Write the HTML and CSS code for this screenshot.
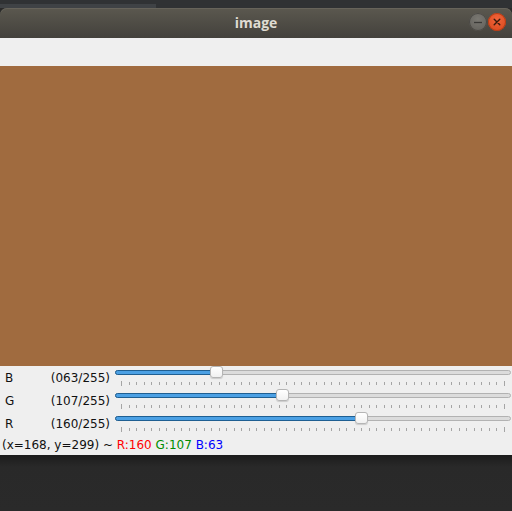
FILE: index.html
```html
<!DOCTYPE html>
<html>
<head>
<meta charset="utf-8">
<link rel="stylesheet" href="styles.css">
</head>
<body>
<div class="desktop-top"><div class="panel-seg"></div></div>
<div class="window">
  <div class="titlebar">
    <div class="title">image</div>
    <div class="buttons">
      <div class="btn btn-min"><svg width="18" height="18" viewBox="0 0 18 18"><line x1="5" y1="9.5" x2="13" y2="9.5" stroke="#3a3936" stroke-width="1.3"/></svg></div>
      <div class="btn btn-close"><svg width="18" height="18" viewBox="0 0 18 18"><path d="M6.2 6.2 L11.8 11.8 M11.8 6.2 L6.2 11.8" stroke="#3a1a0c" stroke-width="1.4" stroke-linecap="round"/></svg></div>
    </div>
  </div>
  <div class="toolbar"></div>
  <div class="canvas"></div>
  <div class="controls">
    <div class="row">
      <div class="name">B</div>
      <div class="val">(063/255)</div>
      <div class="slider">
        <div class="track"><div class="fill" style="width:101px"></div></div>
        <div class="thumb" style="left:94.5px"></div>
        <div class="ticks" id="t1"></div>
      </div>
    </div>
    <div class="row">
      <div class="name">G</div>
      <div class="val">(107/255)</div>
      <div class="slider">
        <div class="track"><div class="fill" style="width:167px"></div></div>
        <div class="thumb" style="left:160.5px"></div>
        <div class="ticks"></div>
      </div>
    </div>
    <div class="row">
      <div class="name">R</div>
      <div class="val">(160/255)</div>
      <div class="slider">
        <div class="track"><div class="fill" style="width:246px"></div></div>
        <div class="thumb" style="left:239.5px"></div>
        <div class="ticks"></div>
      </div>
    </div>
    <div class="status">(x=168, y=299) ~ <span class="r">R:160</span> <span class="g">G:107</span> <span class="b">B:63</span></div>
  </div>
</div>
<div class="desk-bottom"></div>
<script src="ticks.js"></script>
</body>
</html>
```
FILE: ticks.js
```js
document.querySelectorAll('.ticks').forEach(function (t) {
  for (var i = 0; i <= 51; i++) {
    var s = document.createElement('span');
    s.className = (i === 0 || i === 51) ? 'tick long' : 'tick';
    t.appendChild(s);
  }
});
```
FILE: styles.css
```css
html, body {
  margin: 0;
  padding: 0;
  background: #2a2a2a;
  width: 512px;
  height: 511px;
  overflow: hidden;
  font-family: "DejaVu Sans", sans-serif;
}
.desktop-top {
  height: 8px;
  background: #303234;
  padding-top: 4px;
  box-sizing: border-box;
}
.panel-seg {
  width: 156px;
  height: 4px;
  background: #3f4245;
}
.window {
  display: flex;
  flex-direction: column;
  width: 512px;
}
.titlebar {
  height: 30px;
  border-radius: 7px 7px 0 0;
  background: linear-gradient(#5b584f, #43413c);
  box-shadow: inset 0 1px 0 #67645b;
  display: flex;
  align-items: center;
  justify-content: center;
  position: relative;
}
.title {
  font-family: "Open Sans", sans-serif;
  font-weight: 700;
  font-size: 14px;
  color: #dfdbd2;
  margin-top: -1px;
}
.buttons {
  position: absolute;
  right: 6px;
  top: 5px;
  display: flex;
  gap: 1px;
}
.btn {
  width: 18px;
  height: 18px;
  border-radius: 50%;
}
.btn svg { display: block; }
.btn-min {
  background: radial-gradient(circle at 50% 35%, #7a7872, #5f5d58);
  box-shadow: inset 0 0 0 1px #4a4844;
}
.btn-close {
  background: radial-gradient(circle at 50% 35%, #f0643a, #d8461a);
  box-shadow: inset 0 0 0 1px #b43c16;
}
.toolbar {
  height: 28px;
  background: #efefef;
}
.canvas {
  height: 300px;
  background: #a06b3f;
}
.controls {
  background: #efefef;
  height: 89px;
  display: flex;
  flex-direction: column;
}
.row {
  height: 23px;
  display: flex;
  font-size: 12px;
  color: #111;
}
.name {
  width: 40px;
  padding-left: 5px;
  padding-top: 4px;
  line-height: 16px;
}
.val {
  width: 65px;
  text-align: right;
  padding-top: 4px;
  line-height: 16px;
}
.slider {
  margin-left: 5px;
  width: 397px;
  position: relative;
}
.track {
  margin-top: 4px;
  height: 5px;
  box-sizing: border-box;
  border: 1px solid #b2b2b2;
  background: #dcdcdc;
  border-radius: 3px;
  position: relative;
  margin-right: 1px;
}
.fill {
  position: absolute;
  left: -1px;
  top: -1px;
  height: 5px;
  box-sizing: border-box;
  border: 1px solid #1f5f92;
  background: #4ba0e4;
  border-radius: 3px;
}
.thumb {
  position: absolute;
  top: 0;
  width: 13px;
  height: 12px;
  box-sizing: border-box;
  border: 1px solid #b5b5b5;
  border-radius: 3px;
  background: linear-gradient(#ffffff, #f1f1f1);
  box-shadow: 0 1px 1px rgba(0,0,0,0.15);
}
.ticks {
  margin-top: 6px;
  margin-left: 6px;
  width: 384px;
  height: 5px;
  display: flex;
  justify-content: space-between;
  align-items: center;
}
.tick {
  width: 1px;
  height: 3px;
  background: #a5a5a5;
}
.tick.long {
  height: 5px;
}
.status {
  height: 20px;
  line-height: 20px;
  padding-left: 2px;
  font-size: 12px;
  color: #111;
}
.r { color: #ff0000; }
.g { color: #008c00; }
.b { color: #0000ff; }
.desk-bottom {
  height: 56px;
  background: linear-gradient(#1c1c1c, #292929 12px, #2a2a2a);
}
```
